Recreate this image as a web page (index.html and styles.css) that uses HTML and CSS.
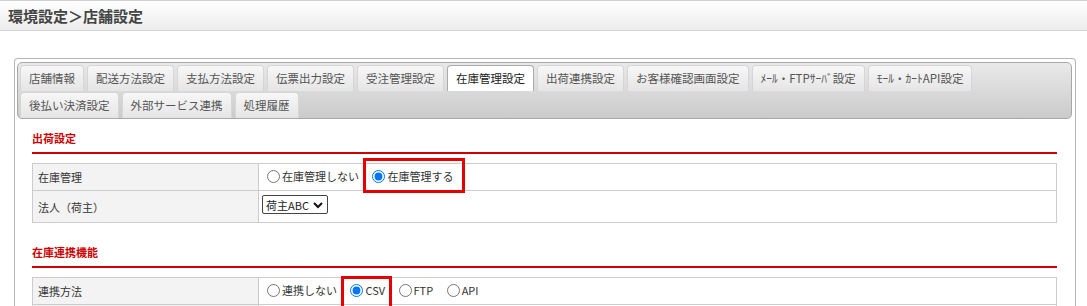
FILE: index.html
```html
<!DOCTYPE html>
<html lang="ja">
<head>
  <meta charset="UTF-8" />
  <title>環境設定＞店舗設定</title>
  <link rel="stylesheet" href="styles.css">
</head>
<body>
  <h1 class="page-title">環境設定＞店舗設定</h1>

  <div class="panel">
    <!-- タブ -->
    <ul class="tabs">
      <li class="tab">店舗情報</li>
      <li class="tab">配送方法設定</li>
      <li class="tab">支払方法設定</li>
      <li class="tab">伝票出力設定</li>
      <li class="tab">受注管理設定</li>
      <li class="tab active">在庫管理設定</li>
      <li class="tab">出荷連携設定</li>
      <li class="tab">お客様確認画面設定</li>
      <li class="tab">ﾒｰﾙ・FTPｻｰﾊﾞ設定</li>
      <li class="tab">ﾓｰﾙ・ｶｰﾄAPI設定</li>
      <li class="tab">後払い決済設定</li>
      <li class="tab">外部サービス連携</li>
      <li class="tab">処理履歴</li>
    </ul>

    <div class="content">
      <!-- 出荷設定 -->
      <h2 class="section-title first">出荷設定</h2>
      <table class="form-table">
        <tr>
          <th>在庫管理</th>
          <td>
            <label class="radio"><input type="radio" name="stock">在庫管理しない</label>
            <label class="radio mark mark-stock"><input type="radio" name="stock" checked>在庫管理する</label>
          </td>
        </tr>
        <tr class="tall">
          <th>法人（荷主）</th>
          <td class="top">
            <select class="select">
              <option>荷主ABC</option>
            </select>
          </td>
        </tr>
      </table>

      <!-- 在庫連携機能 -->
      <h2 class="section-title">在庫連携機能</h2>
      <table class="form-table">
        <tr>
          <th>連携方法</th>
          <td>
            <label class="radio"><input type="radio" name="link">連携しない</label>
            <label class="radio mark mark-csv"><input type="radio" name="link" checked>CSV</label>
            <label class="radio"><input type="radio" name="link">FTP</label>
            <label class="radio"><input type="radio" name="link">API</label>
          </td>
        </tr>
        <tr>
          <th>&nbsp;</th>
          <td>&nbsp;</td>
        </tr>
      </table>
    </div>
  </div>
</body>
</html>
```

FILE: styles.css
```css
body {
  margin: 0;
  font-family: "Noto Sans CJK JP", "Noto Sans", sans-serif;
  font-size: 11px;
  color: #333;
  background-color: #fff;
  overflow: hidden;
}

.page-title {
  margin: 0;
  height: 29px;
  line-height: 29px;
  padding-left: 8px;
  font-size: 15px;
  font-weight: bold;
  color: #444;
  background: linear-gradient(#fff, #ececec);
  border-top: 1px solid #d0d0d0;
  border-bottom: 1px solid #d4d4d4;
}

.panel {
  margin: 27px 11px 0 14px;
  padding: 3px 3px 30px 2px;
  border: 1px solid #b5b5b5;
  border-bottom: none;
  border-radius: 4px 4px 0 0;
}

.tabs {
  list-style: none;
  margin: 0;
  padding: 2px 2px 0;
  display: flex;
  flex-wrap: wrap;
  gap: 1px 3px;
  border: 1px solid #a8a8a8;
  border-radius: 5px;
  background: linear-gradient(#e9e9e9, #cbcbcb);
}

.tab {
  box-sizing: border-box;
  height: 26px;
  line-height: 25px;
  padding: 0 8px;
  font-size: 11.5px;
  color: #555;
  border: 1px solid #d6d6d6;
  border-bottom: none;
  border-radius: 4px 4px 0 0;
  background: linear-gradient(#f7f7f7, #e5e5e5);
}

.tab.active {
  background: #fff;
  border-color: #aaa;
  color: #222;
}

.content {
  padding: 0 15px;
}

.section-title {
  margin: 20px 0 9px;
  padding-bottom: 5px;
  font-size: 11px;
  line-height: 18px;
  font-weight: bold;
  color: #c00;
  border-bottom: 2px solid #c00;
}

.section-title.first {
  margin-top: 10px;
}

.form-table {
  width: 100%;
  border-collapse: collapse;
}

.form-table th,
.form-table td {
  border: 1px solid #ccc;
  height: 26px;
  padding: 0 3px;
  text-align: left;
  vertical-align: middle;
}

.form-table th {
  width: 215px;
  padding: 0 5px;
  font-weight: normal;
  background-color: #f3f3f3;
}

.form-table .tall th,
.form-table .tall td {
  height: 31px;
}

.form-table td.top {
  vertical-align: top;
  height: 27px;
  padding-top: 4px;
}

.radio {
  display: inline-flex;
  align-items: center;
  margin-right: 6px;
  line-height: 16px;
}

.radio input {
  width: 13px;
  height: 13px;
  margin: 0 2px 0 5px;
}

.mark {
  position: relative;
}

.mark::after {
  content: "";
  position: absolute;
  border: 3px solid #e60000;
}

.mark-stock::after {
  left: -4px;
  right: -12px;
  top: -10px;
  bottom: -9px;
}

.mark-csv::after {
  left: -4px;
  right: -7px;
  top: -6px;
  bottom: -12px;
}

.select {
  -webkit-appearance: none;
  appearance: none;
  width: 66px;
  height: 19px;
  padding: 0 16px 0 3px;
  font-family: inherit;
  font-size: 11px;
  color: #222;
  border: 1px solid #444;
  border-radius: 2px;
  background: #fff url("data:image/svg+xml,%3Csvg xmlns='http://www.w3.org/2000/svg' width='10' height='8'%3E%3Cpath d='M1 2l4 4 4-4' fill='none' stroke='%23111' stroke-width='2'/%3E%3C/svg%3E") no-repeat right 4px center;
}
```
